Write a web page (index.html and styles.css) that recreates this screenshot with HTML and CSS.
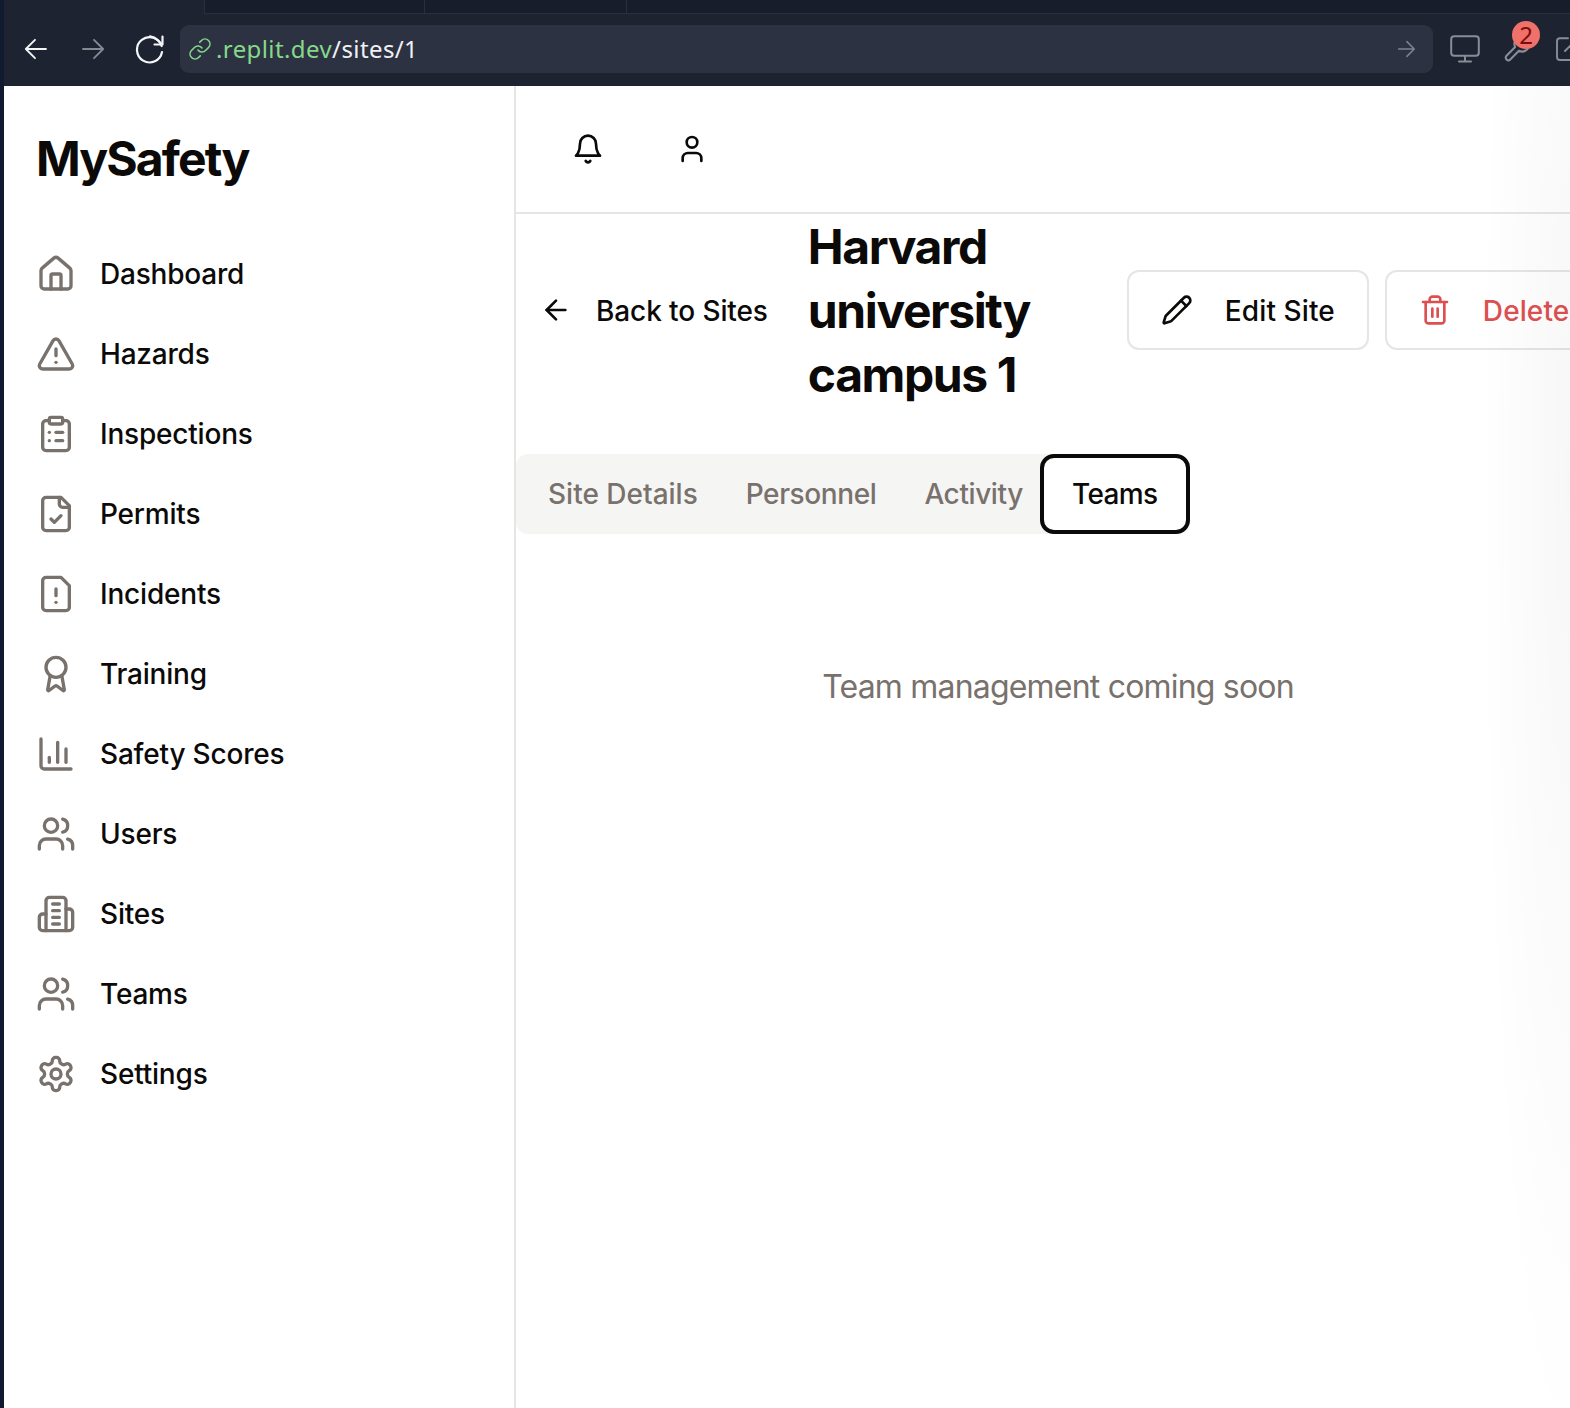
FILE: index.html
```html
<!DOCTYPE html>
<html lang="en">
<head>
<meta charset="utf-8">
<title>MySafety</title>
<link rel="stylesheet" href="styles.css">
</head>
<body>
<div class="shell">
  <div class="edge"></div>
  <div class="window">
    <div class="chrome">
      <div class="tabstrip">
        <div class="tab-space"></div>
        <div class="tab tab-a"></div>
        <div class="tab tab-b"></div>
        <div class="tab tab-c"></div>
      </div>
      <div class="toolbar">
        <svg class="b-back" viewBox="0 0 24 24"><path d="M12 2 2 12l10 10M2 12h22"/></svg>
        <svg class="b-forward" viewBox="0 0 24 24"><path d="M12 2l10 10-10 10M22 12H0"/></svg>
        <svg class="b-reload" viewBox="0 0 32 32"><path d="M27.6 13A12.6 12.6 0 1 0 28 19"/><path d="M28.5 3.5V11.5H20.5"/><path d="M27.8 11.2 23.5 7A12.6 12.6 0 0 0 16 3.4"/></svg>
        <div class="urlbar">
          <svg class="b-link" viewBox="0 0 24 24"><path d="M10 13a5 5 0 0 0 7.54.54l3-3a5 5 0 0 0-7.07-7.07l-1.72 1.71"/><path d="M14 11a5 5 0 0 0-7.54-.54l-3 3a5 5 0 0 0 7.07 7.07l1.71-1.71"/></svg>
          <span class="url"><span class="url-host">.replit.dev</span>/sites/1</span>
          <svg class="b-go" viewBox="0 0 24 24"><path d="M13 4l8 8-8 8M21 12H4"/></svg>
        </div>
        <svg class="b-monitor" viewBox="0 0 30 28"><rect x="1.2" y="1.2" width="27.6" height="19.6" rx="3"/><path d="M15 21v5M9 26.4h12"/></svg>
        <div class="ext">
          <svg class="b-wrench" viewBox="0 0 24 24"><path d="M14.7 6.3a1 1 0 0 0 0 1.4l1.6 1.6a1 1 0 0 0 1.4 0l3.77-3.77a6 6 0 0 1-7.94 7.94l-6.91 6.91a2.12 2.12 0 0 1-3-3l6.91-6.91a6 6 0 0 1 7.94-7.94l-3.76 3.76z"/></svg>
          <span class="badge">2</span>
        </div>
        <svg class="b-open" viewBox="0 0 24 24"><path d="M12 1.2H4a3 3 0 0 0-3 3V20a3 3 0 0 0 3 3h16a3 3 0 0 0 3-3v-8"/><path d="M9 14 22 1"/></svg>
      </div>
    </div>
    <div class="app">
      <aside class="sidebar">
        <h1 class="brand">MySafety</h1>
        <nav class="nav">
          <a class="nav-item"><svg class="icon" viewBox="0 0 24 24"><path d="M15 21v-8a1 1 0 0 0-1-1h-4a1 1 0 0 0-1 1v8"/><path d="M3 10a2 2 0 0 1 .709-1.528l7-5.999a2 2 0 0 1 2.582 0l7 5.999A2 2 0 0 1 21 10v9a2 2 0 0 1-2 2H5a2 2 0 0 1-2-2z"/></svg><span>Dashboard</span></a>
          <a class="nav-item"><svg class="icon" viewBox="0 0 24 24"><path d="m21.73 18-8-14a2 2 0 0 0-3.48 0l-8 14A2 2 0 0 0 4 21h16a2 2 0 0 0 1.73-3"/><path d="M12 9v4"/><path d="M12 17h.01"/></svg><span>Hazards</span></a>
          <a class="nav-item"><svg class="icon" viewBox="0 0 24 24"><rect x="8" y="2" width="8" height="4" rx="1"/><path d="M16 4h2a2 2 0 0 1 2 2v14a2 2 0 0 1-2 2H6a2 2 0 0 1-2-2V6a2 2 0 0 1 2-2h2"/><path d="M12 11h4"/><path d="M12 16h4"/><path d="M8 11h.01"/><path d="M8 16h.01"/></svg><span>Inspections</span></a>
          <a class="nav-item"><svg class="icon" viewBox="0 0 24 24"><path d="M15 2H6a2 2 0 0 0-2 2v16a2 2 0 0 0 2 2h12a2 2 0 0 0 2-2V7Z"/><path d="M14 2v4a2 2 0 0 0 2 2h4"/><path d="m9 15 2 2 4-4"/></svg><span>Permits</span></a>
          <a class="nav-item"><svg class="icon" viewBox="0 0 24 24"><path d="M15 2H6a2 2 0 0 0-2 2v16a2 2 0 0 0 2 2h12a2 2 0 0 0 2-2V7Z"/><path d="M12 9v4"/><path d="M12 17h.01"/></svg><span>Incidents</span></a>
          <a class="nav-item"><svg class="icon" viewBox="0 0 24 24"><path d="m15.477 12.89 1.515 8.526a.5.5 0 0 1-.81.47l-3.58-2.687a1 1 0 0 0-1.197 0l-3.586 2.686a.5.5 0 0 1-.81-.469l1.514-8.526"/><circle cx="12" cy="8" r="6"/></svg><span>Training</span></a>
          <a class="nav-item"><svg class="icon" viewBox="0 0 24 24"><path d="M3 3v16a2 2 0 0 0 2 2h16"/><path d="M18 17V9"/><path d="M13 17V5"/><path d="M8 17v-3"/></svg><span>Safety Scores</span></a>
          <a class="nav-item"><svg class="icon" viewBox="0 0 24 24"><path d="M16 21v-2a4 4 0 0 0-4-4H6a4 4 0 0 0-4 4v2"/><circle cx="9" cy="7" r="4"/><path d="M22 21v-2a4 4 0 0 0-3-3.87"/><path d="M16 3.13a4 4 0 0 1 0 7.75"/></svg><span>Users</span></a>
          <a class="nav-item"><svg class="icon" viewBox="0 0 24 24"><path d="M6 22V4a2 2 0 0 1 2-2h8a2 2 0 0 1 2 2v18Z"/><path d="M6 12H4a2 2 0 0 0-2 2v6a2 2 0 0 0 2 2h2"/><path d="M18 9h2a2 2 0 0 1 2 2v9a2 2 0 0 1-2 2h-2"/><path d="M10 6h4"/><path d="M10 10h4"/><path d="M10 14h4"/><path d="M10 18h4"/></svg><span>Sites</span></a>
          <a class="nav-item"><svg class="icon" viewBox="0 0 24 24"><path d="M16 21v-2a4 4 0 0 0-4-4H6a4 4 0 0 0-4 4v2"/><circle cx="9" cy="7" r="4"/><path d="M22 21v-2a4 4 0 0 0-3-3.87"/><path d="M16 3.13a4 4 0 0 1 0 7.75"/></svg><span>Teams</span></a>
          <a class="nav-item"><svg class="icon" viewBox="0 0 24 24"><path d="M12.22 2h-.44a2 2 0 0 0-2 2v.18a2 2 0 0 1-1 1.73l-.43.25a2 2 0 0 1-2 0l-.15-.08a2 2 0 0 0-2.73.73l-.22.38a2 2 0 0 0 .73 2.73l.15.1a2 2 0 0 1 1 1.72v.51a2 2 0 0 1-1 1.74l-.15.09a2 2 0 0 0-.73 2.73l.22.38a2 2 0 0 0 2.73.73l.15-.08a2 2 0 0 1 2 0l.43.25a2 2 0 0 1 1 1.73V20a2 2 0 0 0 2 2h.44a2 2 0 0 0 2-2v-.18a2 2 0 0 1 1-1.73l.43-.25a2 2 0 0 1 2 0l.15.08a2 2 0 0 0 2.73-.73l.22-.39a2 2 0 0 0-.73-2.73l-.15-.08a2 2 0 0 1-1-1.74v-.5a2 2 0 0 1 1-1.74l.15-.09a2 2 0 0 0 .73-2.73l-.22-.38a2 2 0 0 0-2.73-.73l-.15.08a2 2 0 0 1-2 0l-.43-.25a2 2 0 0 1-1-1.73V4a2 2 0 0 0-2-2z"/><circle cx="12" cy="12" r="3"/></svg><span>Settings</span></a>
        </nav>
      </aside>
      <main class="main">
        <header class="topbar">
          <button class="top-btn"><svg class="icon-md" viewBox="0 0 24 24"><path d="M6 8a6 6 0 0 1 12 0c0 7 3 9 3 9H3s3-2 3-9"/><path d="M10.3 21a1.94 1.94 0 0 0 3.4 0"/></svg></button>
          <button class="top-btn"><svg class="icon-md" viewBox="0 0 24 24"><path d="M19 21v-2a4 4 0 0 0-4-4H9a4 4 0 0 0-4 4v2"/><circle cx="12" cy="7" r="4"/></svg></button>
        </header>
        <section class="site-head">
          <a class="back"><svg class="icon-md" viewBox="0 0 24 24"><path d="m12 19-7-7 7-7"/><path d="M19 12H5"/></svg><span class="label">Back to Sites</span></a>
          <h2 class="site-title">Harvard university campus 1</h2>
          <div class="actions">
            <button class="btn"><svg class="icon-md" viewBox="0 0 24 24"><path d="M21.174 6.812a1 1 0 0 0-3.986-3.987L3.842 16.174a2 2 0 0 0-.5.83l-1.321 4.352a.5.5 0 0 0 .623.622l4.353-1.32a2 2 0 0 0 .83-.497z"/><path d="m15 5 4 4"/></svg><span class="label">Edit Site</span></button>
            <button class="btn btn-danger"><svg class="icon-md" viewBox="0 0 24 24"><path d="M3 6h18"/><path d="M19 6v14c0 1-1 2-2 2H7c-1 0-2-1-2-2V6"/><path d="M8 6V4c0-1 1-2 2-2h4c1 0 2 1 2 2v2"/><path d="M10 11v6"/><path d="M14 11v6"/></svg><span class="label">Delete</span></button>
          </div>
        </section>
        <div class="tabs">
          <button class="tab-btn tab-first">Site Details</button>
          <button class="tab-btn">Personnel</button>
          <button class="tab-btn">Activity</button>
          <button class="tab-btn tab-active">Teams</button>
        </div>
        <p class="empty">Team management coming soon</p>
      </main>
      <div class="screen-fade"></div>
    </div>
  </div>
</div>
</body>
</html>
```
FILE: styles.css
```css
* { box-sizing: border-box; }
html, body { margin: 0; height: 100%; overflow: hidden; background: #fff; }
body { font-family: Inter, "Liberation Sans", sans-serif; color: #0c0a09; }
svg { fill: none; stroke: currentColor; stroke-linecap: round; stroke-linejoin: round; flex: none; display: block; }

.shell { display: flex; width: 1570px; height: 1408px; overflow: hidden; }
.edge { width: 4px; background: #101a30; flex: none; }
.window { flex: 1; min-width: 0; display: flex; flex-direction: column; }

.chrome { height: 86px; background: #1e2332; flex: none; }
.tabstrip { display: flex; height: 14px; }
.tab-space { width: 200px; flex: none; }
.tab { height: 14px; background: #181d2c; border-left: 1px solid #2a2f3f; border-bottom: 1px solid #2a2f3f; }
.tab-a { width: 220px; }
.tab-b { width: 202px; }
.tab-c { flex: 1; }

.toolbar { display: flex; align-items: center; height: 48px; margin-top: 11px; }
.b-back { width: 24px; height: 22px; margin-left: 19px; color: #f4f5f7; stroke-width: 2; }
.b-forward { width: 24px; height: 22px; margin-left: 35px; color: #878a93; stroke-width: 2; }
.b-reload { width: 32px; height: 32px; margin-left: 28px; color: #f4f5f7; stroke-width: 2.2; }
.urlbar { width: 1253px; height: 48px; margin-left: 14px; padding: 0 16px 0 8px; background: #2d3242; border-radius: 9px; display: flex; align-items: center; flex: none; }
.b-link { width: 24px; height: 24px; color: #86d98a; stroke-width: 1.6; }
.url { margin-left: 4px; font-family: "Noto Sans", sans-serif; font-size: 24px; line-height: 32px; letter-spacing: 0.4px; color: #f0f1f4; flex: 1; }
.url-host { color: #86d98a; }
.b-go { width: 22px; height: 22px; color: #7f828c; stroke-width: 1.7; }
.b-monitor { width: 30px; height: 28px; margin-left: 17px; color: #8a8d96; stroke-width: 2; }
.ext { position: relative; width: 30px; height: 30px; margin-left: 22px; flex: none; }
.b-wrench { width: 30px; height: 30px; color: #8a8d96; stroke-width: 1.7; }
.badge { position: absolute; left: 10px; top: -13px; width: 28px; height: 28px; border-radius: 50%; background: #f0706a; color: #7a0c0c; font-family: "Noto Sans", sans-serif; font-size: 24px; line-height: 28px; text-align: center; }
.b-open { width: 26px; height: 24px; margin-left: 23px; color: #8a8d96; stroke-width: 1.9; }

.app { position: relative; flex: 1; min-height: 0; display: flex; }
.screen-fade { position: absolute; inset: 0; pointer-events: none; background: radial-gradient(ellipse 90px 1000px at 100% 30%, rgba(0, 0, 0, 0.03), transparent); }
.sidebar { width: 512px; flex: none; border-right: 2px solid #e7e5e4; background: #fff; }
.brand { margin: 0; padding: 41px 0 0 32px; height: 148px; font-size: 48px; line-height: 64px; font-weight: 700; letter-spacing: -1.9px; }
.nav { display: flex; flex-direction: column; }
.nav-item { display: flex; align-items: center; gap: 24px; height: 80px; padding-left: 32px; font-size: 28px; line-height: 40px; font-weight: 500; letter-spacing: -0.2px; }
.label { padding-top: 1px; }
.icon { width: 40px; height: 40px; color: #78716c; stroke-width: 2; }
.icon-md { width: 32px; height: 32px; stroke-width: 2; }

.main { width: 1084px; flex: none; }
.topbar { display: flex; gap: 24px; height: 128px; padding-left: 32px; align-items: center; border-bottom: 2px solid #e7e5e4; }
.top-btn { width: 80px; height: 80px; padding: 0; border: 0; background: none; color: #0c0a09; display: flex; align-items: center; justify-content: center; }

.site-head { display: flex; align-items: center; gap: 16px; height: 192px; }
.back { display: flex; align-items: center; gap: 24px; padding: 0 24px; font-size: 28px; line-height: 40px; font-weight: 500; letter-spacing: -0.1px; flex: none; }
.site-title { margin: 2px 0 0; width: 303px; flex: none; font-size: 48px; line-height: 64px; font-weight: 700; letter-spacing: -1.4px; }
.actions { display: flex; gap: 16px; flex: none; }
.btn { display: flex; align-items: center; gap: 32px; height: 80px; padding: 0 32px; border: 2px solid #e7e5e4; border-radius: 12px; background: #fff; font-family: inherit; font-size: 28px; font-weight: 500; letter-spacing: 0.1px; color: #0c0a09; }
.btn-danger { color: #de5050; }

.tabs { display: inline-flex; height: 80px; margin-top: 48px; padding-left: 8px; background: #f5f5f4; border-radius: 12px; vertical-align: top; }
.tab-btn { padding: 0 24px; border: 0; background: none; font-family: inherit; font-size: 28px; font-weight: 500; letter-spacing: -0.4px; color: #78716c; }
.tab-first { letter-spacing: 0; }
.tab-active { margin-left: -7px; padding: 0 28px; border: 4px solid #0c0a09; border-radius: 14px; background: #fff; color: #0c0a09; letter-spacing: -0.6px; }

.empty { margin: 129px 0 0; text-align: center; font-size: 32px; line-height: 48px; letter-spacing: -0.8px; color: #78716c; }
```
